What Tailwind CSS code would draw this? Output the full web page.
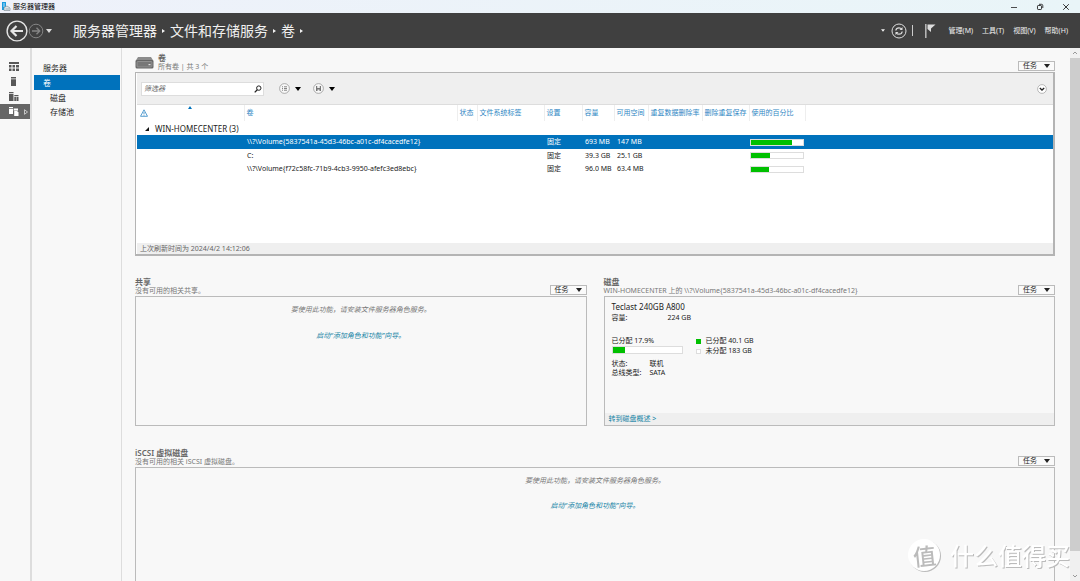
<!DOCTYPE html>
<html lang="zh-CN">
<head>
<meta charset="utf-8">
<title>服务器管理器</title>
<script src="https://cdn.jsdelivr.net/npm/@tailwindcss/browser@4"></script>
</head>
<body class="relative flex h-screen flex-col overflow-hidden bg-[#f8f8f8] font-['Noto_Sans','Noto_Sans_CJK_SC',sans-serif] text-[7px] leading-[10px] text-[#222]">

<svg class="hidden">
  <symbol id="tri" viewBox="0 0 6 4"><path d="M0 0H6L3 4Z" fill="currentColor"/></symbol>
  <symbol id="next" viewBox="0 0 3 4"><path d="M0 0L3 2L0 4Z" fill="currentColor"/></symbol>
</svg>

<!-- Window title bar -->
<div class="flex h-[13px] shrink-0 items-center bg-linear-to-r from-[#eef1fa] to-[#e9f5f8] pl-px text-black">
  <svg class="h-[9px] w-[10px]" viewBox="0 0 10 9"><path d="M1 0H5V8H1Z" fill="#1b9be0"/><path d="M2 2H4M2 4H4" stroke="#fff" stroke-width=".7"/><path d="M3 5.500L6 4L9 6V8.500H3Z" fill="#dfe6ea" stroke="#77858d" stroke-width=".6"/><path d="M4.500 7H8" stroke="#77858d" stroke-width=".6"/></svg>
  <span class="ml-0.5">服务器管理器</span>
  <div class="ml-auto flex items-center gap-[14px] pr-2 text-[#222]">
    <button aria-label="最小化" class="flex size-3 items-center justify-center"><svg class="h-2 w-2" viewBox="0 0 8 8"><path d="M1 4.500H7" stroke="currentColor" stroke-width=".8"/></svg></button>
    <button aria-label="还原" class="flex size-3 items-center justify-center"><svg class="size-2" viewBox="0 0 8 8" fill="none" stroke="currentColor" stroke-width=".9"><rect x="1.500" y="2.500" width="4" height="4" rx=".7"/><path d="M3 1.300H5.500Q6.800 1.300 6.800 2.600V5"/></svg></button>
    <button aria-label="关闭" class="flex size-3 items-center justify-center"><svg class="size-2" viewBox="0 0 8 8"><path d="M1.200 1.200L6.800 6.800M6.800 1.200L1.200 6.800" stroke="currentColor" stroke-width=".9"/></svg></button>
  </div>
</div>

<!-- Header -->
<header class="flex h-[35px] shrink-0 items-center bg-[#404040] text-[#f0f0f0]">
  <button aria-label="后退" class="ml-[6px]"><svg class="size-[22px]" viewBox="0 0 22 22" fill="none" stroke="#e4e4e4"><circle cx="11" cy="11" r="9.900" stroke-width="1.400"/><path d="M17 11H6M10.500 6L5.500 11L10.500 16" stroke-width="2.200"/></svg></button>
  <button aria-label="前进"><svg class="h-4 w-4" viewBox="0 0 16 16" fill="none" stroke="#858585"><circle cx="8" cy="8" r="6.800"/><path d="M4 8H11.500M8.500 4.800L11.700 8L8.500 11.200" stroke-width="1.400"/></svg></button>
  <button aria-label="历史记录" class="ml-0.5"><svg class="h-1 w-[6px] text-[#ddd]"><use href="#tri"/></svg></button>
  <nav aria-label="路径" class="ml-[21px] flex items-center text-[14px] leading-5">
    <a href="#">服务器管理器</a><svg class="mx-[5px] h-1 w-[3px]"><use href="#next"/></svg>
    <a href="#">文件和存储服务</a><svg class="mx-[5px] h-1 w-[3px]"><use href="#next"/></svg>
    <a href="#">卷</a><svg class="mx-[5px] h-1 w-[3px]"><use href="#next"/></svg>
  </nav>
  <div class="ml-auto flex items-center pr-3">
    <svg class="mr-[6px] h-[3px] w-1"><use href="#tri"/></svg>
    <button aria-label="刷新"><svg class="size-4" viewBox="0 0 16 16" fill="none" stroke="#ddd"><circle cx="8" cy="8" r="7"/><path d="M4.800 7.500Q5.200 4.800 8 4.800Q9.700 4.800 10.800 6.200M11.200 8.500Q10.800 11.200 8 11.200Q6.300 11.200 5.200 9.800" stroke-width="1.200"/><path d="M11.500 4V7H8.500ZM4.500 12V9H7.500Z" fill="#ddd" stroke="none"/></svg></button>
    <span class="ml-[5px] h-[11px] w-px bg-[#ccc]"></span>
    <button aria-label="通知" class="ml-[12px]"><svg class="h-[14px] w-[11px]" viewBox="0 0 11 14"><path d="M.8 0V14" stroke="#bbb" stroke-width="1.500"/><path d="M2.500 .5H10.500L6 4.500V8L2.500 5Z" fill="#ddd"/></svg></button>
    <div class="ml-[13px] flex gap-[9px]">
      <button>管理(M)</button><button>工具(T)</button><button>视图(V)</button><button>帮助(H)</button>
    </div>
  </div>
</header>

<div class="flex min-h-0 flex-1">
  <!-- Icon rail -->
  <nav aria-label="角色" class="flex w-8 shrink-0 flex-col border-r-2 border-[#ddd] pt-[11px] text-[#585858]">
    <a href="#" aria-label="仪表板" class="flex h-[15px] items-center pl-[9px]"><svg class="h-[9px] w-[10px]" viewBox="0 0 10 9" fill="currentColor"><path d="M0 0H10V2H0ZM0 3H2.500V5.500H0ZM3.500 3H6V5.500H3.500ZM7 3H10V5.500H7ZM0 6.500H2.500V9H0ZM3.500 6.500H6V9H3.500ZM7 6.500H10V9H7Z"/></svg></a>
    <a href="#" aria-label="本地服务器" class="flex h-[15px] items-center pl-[11px]"><svg class="h-[9px] w-[5px]" viewBox="0 0 5 9" fill="currentColor"><path d="M0 0H5V1.500H0ZM0 2.200H5V9H0Z"/></svg></a>
    <a href="#" aria-label="所有服务器" class="flex h-[15px] items-center pl-[9px]"><svg class="h-[9px] w-[10px]" viewBox="0 0 10 9" fill="currentColor"><path d="M0 0H4.500V1.200H0ZM0 2H4.500V9H0ZM5.300 3H9.500V4H5.300ZM5.300 4.700H9.500V9H5.300Z"/><path d="M7.400 4.500V9" stroke="#f8f8f8" stroke-width=".5"/></svg></a>
    <a href="#" aria-label="文件和存储服务" class="flex h-[15px] items-center bg-[#666] pl-[9px] text-white"><svg class="h-[9px] w-[10px]" viewBox="0 0 10 9" fill="currentColor"><path d="M0 0H4V1.200H0ZM0 2H4V7H0ZM4.700 1.500H9V3H4.700ZM5.200 4H8L9.500 5.300V9H5.200Z"/><path d="M4.700 3.500H9" stroke="currentColor" stroke-width=".6"/></svg><svg class="ml-[5px] h-[6px] w-1" viewBox="0 0 4 6"><path d="M.5 .7L3.500 3L.5 5.300Z" fill="none" stroke="#ddd" stroke-width=".8"/></svg></a>
  </nav>

  <!-- Section navigation -->
  <nav aria-label="文件和存储服务" class="w-[90px] shrink-0 border-r border-[#ddd] pt-[13px] pr-px pl-0.5 text-[8px] leading-[14px]">
    <a href="#" class="block pl-[9px]">服务器</a>
    <a href="#" aria-current="page" class="block bg-[#0072bc] pl-[9px] leading-[15px] text-white">卷</a>
    <a href="#" class="block pl-4 leading-[15px]">磁盘</a>
    <a href="#" class="block pl-4">存储池</a>
  </nav>

  <main class="flex min-w-0 flex-1 flex-col pt-1 pr-[15px] pl-[13px]">
    <!-- Volumes -->
    <section class="shrink-0">
      <div class="flex h-5 items-end">
        <svg class="mb-[3px] h-3 w-[19px]" viewBox="0 0 19 12"><path d="M3 0H16L18.500 4H.5Z" fill="#8c8c8c"/><rect x=".5" y="3" width="18" height="8.500" rx="1.500" fill="#666"/><rect x="2" y="4.500" width="15" height="5.500" rx=".8" fill="#777" stroke="#a8a8a8" stroke-width=".6"/><rect x="13.500" y="7" width="2" height="1.200" fill="#ddd"/></svg>
        <div class="mb-px ml-1"><h2 class="text-[8px] leading-[9px] font-semibold text-[#666]">卷</h2><p class="leading-[9px] text-[#777]">所有卷 | 共 3 个</p></div>
        <button class="mb-px ml-auto flex h-[10px] w-[37px] items-center justify-between border border-[#bbb] bg-[#fafafa] pr-1 pl-1">任务<svg class="h-1 w-[6px]"><use href="#tri"/></svg></button>
      </div>
      <div class="border border-r-2 border-b-2 border-[#b4b4b4] bg-white pl-px">
        <div class="flex h-8 items-center border-b border-[#ddd] bg-[#efefef] pl-1">
          <div class="flex h-[14px] w-[123px] items-center border border-[#ddd] bg-white">
            <input aria-label="筛选器" placeholder="筛选器" class="min-w-0 flex-1 pl-0.5 italic placeholder:text-[#666]">
            <button aria-label="搜索" class="mr-px"><svg class="size-2" viewBox="0 0 8 8" fill="none" stroke="#222"><circle cx="4.800" cy="3.100" r="2.200"/><path d="M3.300 4.700L.7 7.400" stroke-width="1.300"/></svg></button>
          </div>
          <button aria-label="筛选条件" class="ml-[15px] flex items-center gap-[5px]"><svg class="size-[11px]" viewBox="0 0 11 11" fill="none" stroke="#777"><circle cx="5.500" cy="5.500" r="4.900" fill="#f8f8f8" stroke="#999" stroke-width=".8"/><path d="M3 3.800H4M5 3.800H8M3 5.500H4M5 5.500H8M3 7.200H4M5 7.200H8" stroke-width=".9"/></svg><svg class="h-1 w-[6px] text-black"><use href="#tri"/></svg></button>
          <button aria-label="保存查询" class="ml-3 flex items-center gap-[5px]"><svg class="size-[11px]" viewBox="0 0 11 11"><circle cx="5.500" cy="5.500" r="4.900" fill="#f8f8f8" stroke="#999" stroke-width=".8"/><path d="M3 3H8V8H3Z" fill="#777"/><path d="M4.200 3H6.800V5H4.200ZM4.500 6.500H6.500V8H4.500Z" fill="#eee"/></svg><svg class="h-1 w-[6px] text-black"><use href="#tri"/></svg></button>
          <button aria-label="展开" class="mr-[6px] ml-auto"><svg class="size-[10px]" viewBox="0 0 10 10" fill="none"><circle cx="5" cy="5" r="4.400" fill="#fff" stroke="#aaa" stroke-width=".8"/><path d="M2.800 4L5 6L7.200 4" stroke="#222" stroke-width="1.300"/></svg></button>
        </div>
        <div class="h-[138px]">
          <table class="w-full table-fixed border-collapse text-left whitespace-nowrap">
            <colgroup><col class="w-[107px]"><col class="w-[213px]"><col class="w-5"><col class="w-[67px]"><col class="w-[38px]"><col class="w-8"><col class="w-[34px]"><col class="w-[54px]"><col class="w-[47px]"><col class="w-14"><col></colgroup>
            <thead class="text-[#2f87c4]">
              <tr class="h-4 *:border-r *:border-[#eee] *:pl-0.5 *:font-normal">
                <th class="relative pl-[3px]!" aria-label="警告"><svg class="size-2" viewBox="0 0 8 8" fill="none" stroke="currentColor"><path d="M4 .8L7.500 7.300H.5Z" stroke-width=".8"/><path d="M4 3V5.200M4 5.800V6.600" stroke-width=".8"/></svg><svg class="absolute top-px left-[51px] h-[3px] w-1" viewBox="0 0 4 3"><path d="M0 3L2 0L4 3Z" fill="#0072bc"/></svg></th>
                <th>卷</th><th>状态</th><th>文件系统标签</th><th>设置</th><th>容量</th><th>可用空间</th><th>重复数据删除率</th><th>删除重复保存</th><th>使用的百分比</th><th class="border-r-0!"></th>
              </tr>
            </thead>
            <tbody>
              <tr class="h-[14px]"><th colspan="11" class="pt-0.5 pl-2 text-[8px] font-normal"><span class="flex items-center"><svg class="mr-[6px] size-1" viewBox="0 0 4 4"><path d="M4 0V4H0Z" fill="#111"/></svg>WIN-HOMECENTER (3)</span></th></tr>
              <tr class="h-[14px] bg-[#0072bc] text-white *:pl-[3px]"><td></td><td>\\?\Volume{5837541a-45d3-46bc-a01c-df4cacedfe12}</td><td></td><td></td><td>固定</td><td>693 MB</td><td>147 MB</td><td></td><td></td><td class="pl-px!"><div class="h-[7px] w-[54px] border border-[#ddd] bg-white"><div class="h-full bg-[#00c000]" style="width:78%"></div></div></td><td></td></tr>
              <tr class="h-[13px] *:pl-[3px]"><td></td><td>C:</td><td></td><td></td><td>固定</td><td>39.3 GB</td><td>25.1 GB</td><td></td><td></td><td class="pl-px!"><div class="h-[7px] w-[54px] border border-[#ddd] bg-white"><div class="h-full bg-[#00c000]" style="width:36%"></div></div></td><td></td></tr>
              <tr class="h-[14px] *:pl-[3px]"><td></td><td>\\?\Volume{f72c58fc-71b9-4cb3-9950-afefc3ed8ebc}</td><td></td><td></td><td>固定</td><td>96.0 MB</td><td>63.4 MB</td><td></td><td></td><td class="pl-px!"><div class="h-[7px] w-[54px] border border-[#ddd] bg-white"><div class="h-full bg-[#00c000]" style="width:34%"></div></div></td><td></td></tr>
            </tbody>
          </table>
        </div>
        <div class="h-[11px] bg-[#efefef] pl-[3px] leading-[11px] text-[#666]">上次刷新时间为 2024/4/2 14:12:06</div>
      </div>
    </section>

    <div class="mt-5 grid shrink-0 grid-cols-2 gap-[17px]">
      <!-- Shares -->
      <section class="flex flex-col">
        <div class="flex h-5 items-end">
          <div><h2 class="text-[8px] leading-[9px] font-semibold text-[#666]">共享</h2><p class="leading-[10px] text-[#777]">没有可用的相关共享。</p></div>
          <button class="mb-px ml-auto flex h-[10px] w-[37px] items-center justify-between border border-[#bbb] bg-[#fafafa] pr-1 pl-1">任务<svg class="h-1 w-[6px]"><use href="#tri"/></svg></button>
        </div>
        <div class="h-[130px] border border-[#bbb] pt-2 text-center italic">
          <p class="text-[#777]">要使用此功能，请安装文件服务器角色服务。</p>
          <a href="#" class="mt-4 inline-block text-[#1583a5]">启动“添加角色和功能”向导。</a>
        </div>
      </section>
      <!-- Disk -->
      <section class="flex flex-col">
        <div class="flex h-5 items-end">
          <div><h2 class="text-[8px] leading-[9px] font-semibold text-[#666]">磁盘</h2><p class="leading-[10px] text-[#777]">WIN-HOMECENTER 上的 \\?\Volume{5837541a-45d3-46bc-a01c-df4cacedfe12}</p></div>
          <button class="mb-px ml-auto flex h-[10px] w-[37px] items-center justify-between border border-[#bbb] bg-[#fafafa] pr-1 pl-1">任务<svg class="h-1 w-[6px]"><use href="#tri"/></svg></button>
        </div>
        <div class="flex h-[130px] flex-col border border-[#bbb]">
          <div class="flex-1 pt-1 pl-[7px]">
            <h3 class="text-[8px] leading-3">Teclast 240GB A800</h3>
            <div class="flex"><span class="w-14">容量:</span><span>224 GB</span></div>
            <div class="mt-[13px] flex gap-[13px]">
              <div><p>已分配 17.9%</p><div class="h-2 w-[71px] border border-[#ddd] bg-white"><div class="h-full bg-[#00c000]" style="width:18%"></div></div></div>
              <ul>
                <li class="flex items-center gap-[5px]"><span class="size-[5px] bg-[#00c000]"></span>已分配 40.1 GB</li>
                <li class="flex items-center gap-[5px]"><span class="size-[5px] border border-[#ddd] bg-white"></span>未分配 183 GB</li>
              </ul>
            </div>
            <dl class="mt-[3px] grid grid-cols-[38px_1fr] leading-[9px]"><dt>状态:</dt><dd>联机</dd><dt>总线类型:</dt><dd>SATA</dd></dl>
          </div>
          <div class="h-3 bg-[#efefef] pl-1 leading-3"><a href="#" class="block text-[#1583a5]">转到磁盘概述 &gt;</a></div>
        </div>
      </section>
    </div>

    <!-- iSCSI -->
    <section class="mt-[21px] flex min-h-0 flex-1 flex-col">
      <div class="flex h-5 shrink-0 items-end">
        <div><h2 class="text-[8px] leading-[9px] font-semibold text-[#666]">iSCSI 虚拟磁盘</h2><p class="leading-[10px] text-[#777]">没有可用的相关 iSCSI 虚拟磁盘。</p></div>
        <button class="mb-px ml-auto flex h-[10px] w-[37px] items-center justify-between border border-[#bbb] bg-[#fafafa] pr-1 pl-1">任务<svg class="h-1 w-[6px]"><use href="#tri"/></svg></button>
      </div>
      <div class="flex-1 border border-b-0 border-[#bbb] pt-2 text-center italic">
        <p class="text-[#777]">要使用此功能，请安装文件服务器角色服务。</p>
        <a href="#" class="mt-[15px] inline-block text-[#1583a5]">启动“添加角色和功能”向导。</a>
      </div>
    </section>
  </main>

  <!-- Scroll bar -->
  <div class="flex w-[10px] shrink-0 flex-col items-center bg-[#f0f0f0]">
    <svg class="h-[10px] w-2 shrink-0" viewBox="0 0 8 10"><path d="M2 6L4 4L6 6" fill="none" stroke="#999"/></svg>
    <div class="w-full flex-1 bg-[#cdcdcd]"></div>
    <svg class="mt-5 h-[10px] w-2 shrink-0" viewBox="0 0 8 10"><path d="M2 4L4 6L6 4" fill="none" stroke="#999"/></svg>
  </div>
</div>

<!-- Watermark -->
<div class="pointer-events-none absolute right-[10px] bottom-[10px] flex items-center gap-[10px] font-['Noto_Sans_CJK_SC',sans-serif] text-[24px] leading-8 text-white drop-shadow-[1px_1px_0_#bbb]">
  <span class="flex size-8 items-center justify-center rounded-full bg-white text-[23px] font-medium text-[#bbb]"><span class="-rotate-6">值</span></span>
  <span class="font-medium">什么值得买</span>
</div>
</body>
</html>
